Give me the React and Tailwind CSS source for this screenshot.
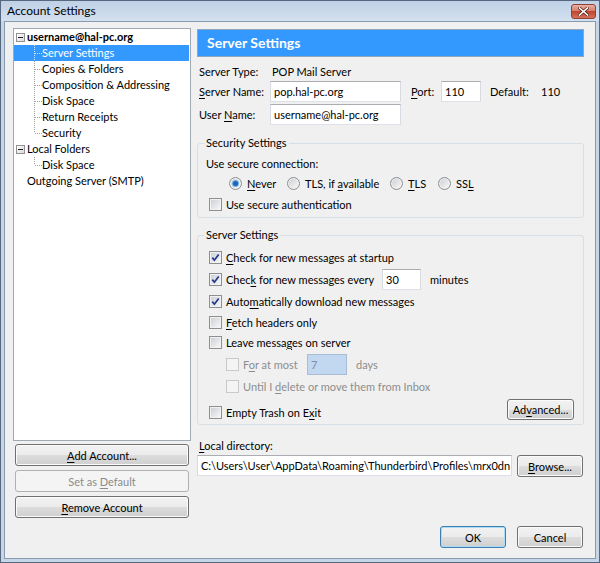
import React from "react";

const U = ({ children }) => <span className="underline underline-offset-2">{children}</span>;

function Checkbox({ checked = false, disabled = false }) {
  return (
    <span
      className={`flex h-[13px] w-[13px] shrink-0 items-center justify-center border ${
        disabled
          ? "border-[#c9c9c9] bg-[#f4f4f4]"
          : "border-[#8e8f8f] bg-linear-to-br from-[#c9cdd3] to-[#fafafa] shadow-[inset_0_0_0_1px_#f1f1f1]"
      }`}
    >
      {checked && (
        <svg width="9" height="9" viewBox="0 0 9 9">
          <path d="M1.3 4.6 3.4 7.2 7.7 1.4" fill="none" stroke="#1f3a8a" strokeWidth="1.7" />
        </svg>
      )}
    </span>
  );
}

function Radio({ checked = false }) {
  return (
    <span className="flex h-[13px] w-[13px] shrink-0 items-center justify-center rounded-full border border-[#8e8f8f] bg-linear-to-br from-[#c9cdd3] to-[#fbfbfb] shadow-[inset_0_0_0_1px_#f1f1f1]">
      {checked && <span className="h-[5px] w-[5px] rounded-full bg-[#1d63b8] shadow-[0_0_0_1px_#6fb0e8]" />}
    </span>
  );
}

function Btn({ children, className = "", disabled = false, primary = false }) {
  const look = disabled
    ? "border-[#adb2b5] bg-[#f4f4f4] text-[#8b8b8b]"
    : primary
    ? "border-[#3c7fb1] bg-[linear-gradient(#f2f2f2,#ebebeb_50%,#dddddd_50%,#cfcfcf)] shadow-[inset_0_0_0_1px_#a8dcf7]"
    : "border-[#707070] bg-[linear-gradient(#f2f2f2,#ebebeb_50%,#dddddd_50%,#cfcfcf)] shadow-[inset_0_0_0_1px_#fbfbfb]";
  return (
    <div className={`flex items-center justify-center rounded-[3px] border ${look} ${className}`}>{children}</div>
  );
}

function Input({ children, className = "" }) {
  return (
    <div
      className={`flex items-center overflow-hidden whitespace-nowrap border border-[#abadb3] border-b-[#dde1e8] border-l-[#d7dbe2] border-r-[#d7dbe2] bg-white pl-[3px] ${className}`}
    >
      {children}
    </div>
  );
}

function MinusBox() {
  return (
    <span className="flex h-[9px] w-[9px] shrink-0 items-center justify-center border border-[#919191] bg-linear-to-br from-white to-[#d9d9d9]">
      <span className="h-px w-[5px] bg-[#1f1f1f]" />
    </span>
  );
}

function Connector({ last, light }) {
  const c = light ? "#cfe5ff" : "#a0a0a0";
  return (
    <svg width="8" height="16" viewBox="0 0 8 16" className="shrink-0">
      <line x1="0.5" y1="0" x2="0.5" y2={last ? 8 : 16} stroke={c} strokeDasharray="1 1" />
      <line x1="1" y1="8.5" x2="8" y2="8.5" stroke={c} strokeDasharray="1 1" />
    </svg>
  );
}

function TreeChild({ label, selected = false, last = false }) {
  return (
    <div className={`flex h-[16px] items-center pl-[20px] ${selected ? "bg-[#3399ff] text-white" : ""}`}>
      <Connector last={last} light={selected} />
      <span className="pb-px">{label}</span>
    </div>
  );
}

function TreeRoot({ label, bold = false, box = true }) {
  return (
    <div className="flex h-[16px] items-center pl-[2px]">
      {box ? <MinusBox /> : <span className="w-[9px] shrink-0" />}
      <span className={`ml-[2px] pb-px ${bold ? "font-bold" : ""}`}>{label}</span>
    </div>
  );
}

function RadioItem({ checked = false, className = "", children }) {
  return (
    <span className={`flex items-center gap-[5px] ${className}`}>
      <Radio checked={checked} />
      <span>{children}</span>
    </span>
  );
}

export default function App() {
  return (
    <div className="flex h-[563px] w-[600px] flex-col border border-[#56687e] bg-[#c6d6e9] font-['Lato',sans-serif] text-[11px] leading-none text-black">
      {/* title bar */}
      <div className="flex h-[20px] shrink-0 items-center justify-between bg-linear-to-b from-[#bfd1e6] to-[#d3e0ef] pl-[6px] pr-[3px]">
        <span className="text-[12px]">Account Settings</span>
        <div className="flex h-[15px] w-[25px] items-center justify-center rounded-[3px] border border-[#8d4436] bg-[linear-gradient(#e8b0a2,#d47b66_50%,#c2462f_50%,#d5715b)]">
          <svg width="11" height="9" viewBox="0 0 11 9">
            <path d="M1.5 1 9.5 8M9.5 1 1.5 8" stroke="#5a2219" strokeWidth="3" strokeLinecap="square" />
            <path d="M1.5 1 9.5 8M9.5 1 1.5 8" stroke="#ffffff" strokeWidth="1.6" strokeLinecap="square" />
          </svg>
        </div>
      </div>

      {/* client area */}
      <div className="mx-[3px] flex flex-1 border border-[#8a9bb0] bg-[#f0f0f0] pl-[8px] pr-[11px] pt-[6px]">
        {/* left column */}
        <div className="flex w-[178px] shrink-0 flex-col">
          <div className="h-[413px] border border-[#a3a9b1] bg-white pr-px">
            <TreeRoot label="username@hal-pc.org" bold />
            <TreeChild label="Server Settings" selected />
            <TreeChild label="Copies & Folders" />
            <TreeChild label="Composition & Addressing" />
            <TreeChild label="Disk Space" />
            <TreeChild label="Return Receipts" />
            <TreeChild label="Security" last />
            <TreeRoot label="Local Folders" />
            <TreeChild label="Disk Space" last />
            <TreeRoot label="Outgoing Server (SMTP)" box={false} />
          </div>
          <Btn className="mx-[2px] mt-[3px] h-[22px]">
            <span>
              <U>A</U>dd Account...
            </span>
          </Btn>
          <Btn className="mx-[2px] mt-[4px] h-[22px]" disabled>
            <span>
              Set as <U>D</U>efault
            </span>
          </Btn>
          <Btn className="mx-[2px] mt-[4px] h-[22px]">
            <span>
              <U>R</U>emove Account
            </span>
          </Btn>
        </div>

        {/* right column */}
        <div className="ml-[6px] flex w-[387px] shrink-0 flex-col">
          <div className="mt-px flex h-[28px] items-center border border-[#8fa6c0] bg-[#3399ff] pl-[9px] text-[14px] font-bold text-white">
            Server Settings
          </div>

          <div className="mt-[6px] flex h-[16px] items-center pl-[2px]">
            <span className="w-[73px]">Server Type:</span>
            <span>POP Mail Server</span>
          </div>

          <div className="mt-[2px] flex h-[21px] items-center pl-[2px]">
            <span className="w-[71px]">
              <U>S</U>erver Name:
            </span>
            <Input className="h-[21px] w-[131px]">pop.hal-pc.org</Input>
            <span className="ml-[10px] w-[30px]">
              <U>P</U>ort:
            </span>
            <Input className="h-[21px] w-[40px]">110</Input>
            <span className="ml-[9px] w-[51px]">Default:</span>
            <span>110</span>
          </div>

          <div className="mt-[2px] flex h-[21px] items-center pl-[2px]">
            <span className="w-[71px]">
              User <U>N</U>ame:
            </span>
            <Input className="h-[21px] w-[131px]">username@hal-pc.org</Input>
          </div>

          <fieldset className="mt-[10px] rounded-[3px] border border-[#d5dfe5] pb-[5px] pl-[8px]">
            <legend className="-ml-[2px] px-[2px] leading-[16px]">Security Settings</legend>
            <div className="mt-[4px] flex h-[16px] items-center">Use secure connection:</div>
            <div className="mt-[4px] flex h-[16px] items-center pl-[23px]">
              <RadioItem checked className="w-[58px]">
                <U>N</U>ever
              </RadioItem>
              <RadioItem className="w-[103px]">
                TLS, if <U>a</U>vailable
              </RadioItem>
              <RadioItem className="w-[48px]">
                <U>T</U>LS
              </RadioItem>
              <RadioItem>
                SS<U>L</U>
              </RadioItem>
            </div>
            <div className="mt-[5px] flex h-[16px] items-center gap-[4px] pl-[3px]">
              <Checkbox />
              <span>
                Use secure authent<U>i</U>cation
              </span>
            </div>
          </fieldset>

          <fieldset className="mt-[9px] rounded-[3px] border border-[#d5dfe5] pb-[4px] pl-[8px] pr-[9px]">
            <legend className="-ml-[2px] px-[2px] leading-[16px]">Server Settings</legend>
            <div className="mt-[4px] flex h-[20px] items-center gap-[4px] pl-[3px]">
              <Checkbox checked />
              <span>
                <U>C</U>heck for new messages at startup
              </span>
            </div>
            <div className="mt-[2px] flex h-[21px] items-center pl-[3px]">
              <Checkbox checked />
              <span className="ml-[4px] w-[156px]">
                Chec<U>k</U> for new messages every
              </span>
              <Input className="h-[21px] w-[39px]">30</Input>
              <span className="ml-[9px]">minutes</span>
            </div>
            <div className="mt-px flex h-[20px] items-center gap-[4px] pl-[3px]">
              <Checkbox checked />
              <span>
                Auto<U>m</U>atically download new messages
              </span>
            </div>
            <div className="mt-px flex h-[20px] items-center gap-[4px] pl-[3px]">
              <Checkbox />
              <span>
                <U>F</U>etch headers only
              </span>
            </div>
            <div className="flex h-[20px] items-center gap-[4px] pl-[3px]">
              <Checkbox />
              <span>
                Leave messa<U>g</U>es on server
              </span>
            </div>
            <div className="mt-[2px] flex h-[21px] items-center pl-[20px] text-[#8d8d8d]">
              <Checkbox disabled />
              <span className="ml-[4px] w-[64px]">
                F<U>o</U>r at most
              </span>
              <div className="flex h-[21px] w-[40px] items-center border border-[#a9bdd4] bg-[#c2d8f1] pl-[3px] text-[#7d8fa6]">
                7
              </div>
              <span className="ml-[9px]">days</span>
            </div>
            <div className="mt-px flex h-[20px] items-center gap-[4px] pl-[20px] text-[#8d8d8d]">
              <Checkbox disabled />
              <span>
                Until I <U>d</U>elete or move them from Inbox
              </span>
            </div>
            <div className="mt-[3px] flex h-[21px] items-end justify-between pl-[3px]">
              <div className="flex h-[16px] items-center gap-[4px]">
                <Checkbox />
                <span>
                  Empty Trash on E<U>x</U>it
                </span>
              </div>
              <Btn className="h-[21px] w-[67px]">
                <span>
                  Ad<U>v</U>anced...
                </span>
              </Btn>
            </div>
          </fieldset>

          <div className="mt-[12px] flex h-[16px] items-center pl-[2px]">
            <span>
              <U>L</U>ocal directory:
            </span>
          </div>
          <div className="mt-[2px] flex items-start justify-between pr-px">
            <Input className="h-[21px] w-[315px]">
              C:\Users\User\AppData\Roaming\Thunderbird\Profiles\mrx0dn
            </Input>
            <Btn className="h-[22px] w-[66px]">
              <span>
                <U>B</U>rowse...
              </span>
            </Btn>
          </div>

          <div className="mt-[49px] flex justify-end gap-[11px] pr-px">
            <Btn className="h-[22px] w-[66px]" primary>
              OK
            </Btn>
            <Btn className="h-[22px] w-[66px]">Cancel</Btn>
          </div>
        </div>
      </div>
      <div className="h-[3px] shrink-0" />
    </div>
  );
}
